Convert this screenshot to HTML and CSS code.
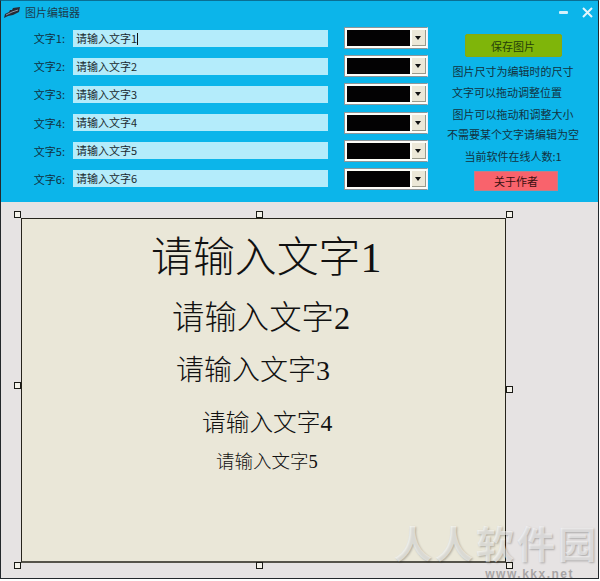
FILE: index.html
```html
<!DOCTYPE html>
<html lang="zh-CN">
<head>
<meta charset="utf-8">
<title>图片编辑器</title>
<link rel="stylesheet" href="styles.css">
</head>
<body>
<div class="window">
  <header class="top">
    <div class="titlebar">
      <svg class="logo" width="16" height="11" viewBox="0 0 16 11"><path d="M0 11 L1 7 L5 5 L6 3 L8 3 L9 1 L16 0 L15 5 L9 8 L4 9 Z" fill="#262b36"/><path d="M2 8 L8 5 L14 3" stroke="#8f97a6" stroke-width="1" fill="none"/></svg>
      <span class="title">图片编辑器</span>
      <div class="winbtns">
        <svg width="9" height="3" viewBox="0 0 9 3"><rect width="9" height="3" rx="1" fill="#d5f1fb"/></svg>
        <svg width="11" height="11" viewBox="0 0 11 11"><path d="M1 1 L10 10 M10 1 L1 10" stroke="#e4f6fc" stroke-width="2"/></svg>
      </div>
    </div>
    <div class="controls">
      <div class="rows">
        <div class="row"><label class="lbl">文字1:</label><div class="field">请输入文字1<i class="caret"></i></div><div class="color"><span class="swatch"></span><span class="arrow"></span></div></div>
        <div class="row"><label class="lbl">文字2:</label><div class="field">请输入文字2</div><div class="color"><span class="swatch"></span><span class="arrow"></span></div></div>
        <div class="row"><label class="lbl">文字3:</label><div class="field">请输入文字3</div><div class="color"><span class="swatch"></span><span class="arrow"></span></div></div>
        <div class="row"><label class="lbl">文字4:</label><div class="field">请输入文字4</div><div class="color"><span class="swatch"></span><span class="arrow"></span></div></div>
        <div class="row"><label class="lbl">文字5:</label><div class="field">请输入文字5</div><div class="color"><span class="swatch"></span><span class="arrow"></span></div></div>
        <div class="row"><label class="lbl">文字6:</label><div class="field">请输入文字6</div><div class="color"><span class="swatch"></span><span class="arrow"></span></div></div>
      </div>
      <div class="side">
        <button class="save">保存图片</button>
        <p class="note n1">图片尺寸为编辑时的尺寸</p>
        <p class="note n2">文字可以拖动调整位置</p>
        <p class="note n3">图片可以拖动和调整大小</p>
        <p class="note n4">不需要某个文字请编辑为空</p>
        <p class="note n5">当前软件在线人数:1</p>
        <button class="about">关于作者</button>
      </div>
    </div>
  </header>
  <main class="stage">
    <div class="canvas">
      <span class="t t1">请输入文字1</span>
      <span class="t t2">请输入文字2</span>
      <span class="t t3">请输入文字3</span>
      <span class="t t4">请输入文字4</span>
      <span class="t t5">请输入文字5</span>
      <i class="h h-tl"></i><i class="h h-tc"></i><i class="h h-tr"></i>
      <i class="h h-ml"></i><i class="h h-mr"></i>
      <i class="h h-bl"></i><i class="h h-bc"></i><i class="h h-br"></i>
    </div>
    <div class="wm"><span class="wm-a">人人软件园</span><span class="wm-b">www.kkx.net</span></div>
  </main>
</div>
</body>
</html>
```

FILE: styles.css
```css
* { box-sizing: border-box; }
html, body { margin: 0; padding: 0; background: #fff; }
body {
  width: 600px; height: 581px; overflow: hidden;
  font-family: "Noto Sans CJK SC", "Liberation Sans", sans-serif;
}
.window {
  width: 599px; height: 579px;
  border: 1px solid #23282c; border-top-color: #0a6f94;
  display: flex; flex-direction: column;
  background: #e6e3e3;
}
.top { height: 201px; background: #0cb5ea; flex: none; }
.titlebar { height: 21px; display: flex; align-items: center; padding: 1px 3px 0 3px; }
.logo { flex: none; }
.title { margin-left: 5px; font-size: 11px; color: #1c3b4c; }
.winbtns { margin-left: auto; display: flex; align-items: center; gap: 14px; padding-right: 2px; }
.controls { display: flex; padding-top: 5px; }
.rows { width: 438px; display: flex; flex-direction: column; gap: 6.2px; flex: none; }
.row { display: flex; align-items: center; height: 22px; }
.lbl { width: 72px; padding-right: 8px; text-align: right; font-size: 11px; color: #12303f; }
.field {
  width: 255px; height: 17px; background: #b4ecfb; margin-right: 16px;
  font-size: 11px; line-height: 17px; padding-left: 3px; color: #1a2a30;
}
.caret { display: inline-block; width: 1px; height: 12px; background: #111; vertical-align: -2px; }
.color {
  width: 84px; height: 22px; display: flex; align-items: center;
  background: #fdfdf8; border: 1px solid #8d979b; border-right-color: #eef; padding: 2px;
}
.swatch { width: 63px; height: 16px; background: #030203; flex: none; }
.arrow {
  width: 14px; height: 16px; margin-left: 2px; position: relative; flex: none;
  background: #ece8d8; border-right: 1px solid #9a9a8c; border-bottom: 1px solid #9a9a8c;
}
.arrow::after {
  content: ""; position: absolute; left: 3px; top: 6px;
  border: 3.5px solid transparent; border-top: 4px solid #111; border-bottom: 0;
}
.side { width: 158px; display: flex; flex-direction: column; align-items: center; position: relative; }
.save {
  width: 97px; height: 23px; margin: 7px 0 0 -10px; padding: 0; border: 1px solid #8aa80e; border-radius: 2px;
  background: #7fb50a; color: #25400a; font: 11px "Noto Sans CJK SC", sans-serif;
}
.note { margin: 0; font-size: 11px; line-height: 16px; color: #12323f; white-space: nowrap; }
.n1 { margin-top: 6px; margin-left: -10px; }
.n2 { margin-top: 5px; margin-left: -22px; }
.n3 { margin-top: 6px; margin-left: -10px; }
.n4 { margin-top: 4px; margin-left: -10px; }
.n5 { margin-top: 6px; margin-left: -10px; }
.about {
  width: 84px; height: 20px; margin: 7px 0 0 -4px; padding: 0; border: 1px solid #c08088;
  background: #f9636c; color: #3a1010; font: 11px "Noto Sans CJK SC", sans-serif;
}
.stage { flex: 1; position: relative; padding: 16px 0 0 20px; }
.canvas {
  position: relative; width: 485px; height: 345px;
  background: #eae7d8; border: 1px solid #26241c; border-bottom-width: 2px; border-bottom-color: #55534a;
}
.t { position: absolute; white-space: nowrap; font-weight: 300; color: #111; line-height: 1; font-family: "Liberation Serif", "Noto Sans CJK SC", serif; }
.t1 { left: 129px; top: 19px; font-size: 41.9px; }
.t2 { left: 150px; top: 83px; font-size: 32.4px; }
.t3 { left: 154px; top: 138px; font-size: 28px; }
.t4 { left: 180px; top: 193px; font-size: 23.7px; }
.t5 { left: 194px; top: 234px; font-size: 18.5px; }
.h { position: absolute; width: 7px; height: 7px; background: #f4f2ea; border: 1px solid #1a1a16; }
.h-tl { left: -8px; top: -8px; }
.h-tc { left: 234px; top: -8px; }
.h-tr { left: 484px; top: -8px; }
.h-ml { left: -8px; top: 163px; }
.h-mr { left: 484px; top: 167px; }
.h-bl { left: -8px; top: 343px; }
.h-bc { left: 234px; top: 343px; }
.h-br { left: 484px; top: 343px; }
.wm { position: absolute; left: 386px; top: 320px; width: 212px; display: flex; flex-direction: column; align-items: flex-end; pointer-events: none; }
.wm-a { font-size: 38px; line-height: 40px; font-weight: 700; letter-spacing: 3px; color: rgba(255,255,255,.55); text-shadow: 1px 1px 2px rgba(0,0,0,.25); white-space: nowrap; }
.wm-b { font: 700 12px/12px "Liberation Sans", sans-serif; letter-spacing: 1.5px; color: #a9a6a6; padding-right: 25px; margin-top: 6px; }
```
